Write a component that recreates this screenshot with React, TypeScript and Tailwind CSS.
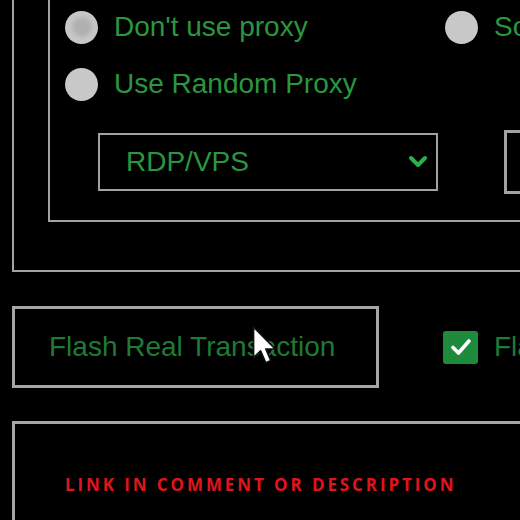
import React from "react";

type RadioProps = {
  label: string;
  active?: boolean;
  className?: string;
};

function Radio({ label, active = false, className = "" }: RadioProps) {
  return (
    <div className={`flex shrink-0 items-center gap-[16px] whitespace-nowrap ${className}`}>
      <span className="flex h-[33px] w-[33px] shrink-0 items-center justify-center rounded-full bg-[#c8c8c8]">
        {active && <span className="h-[20px] w-[20px] rounded-full bg-[#b0b0b0] blur-[2px]" />}
      </span>
      <span className="text-[28px] leading-none text-[#2a963f]">{label}</span>
    </div>
  );
}

function Cursor() {
  return (
    <svg
      className="absolute left-[252px] top-[326px]"
      width="25"
      height="39"
      viewBox="0 0 13 21"
      aria-hidden="true"
    >
      <path
        d="M0.6 0.6 L0.6 17 L4.4 13.4 L7.2 19.8 L9.9 18.6 L7.2 12.4 L12.2 12.4 Z"
        fill="#ffffff"
        stroke="#111111"
        strokeWidth="0.9"
        strokeLinejoin="round"
      />
    </svg>
  );
}

export default function App() {
  return (
    <main className="relative h-[520px] w-[520px] overflow-hidden bg-black font-['Liberation_Sans',Arial,sans-serif]">
      {/* proxy settings group */}
      <section className="ml-[12px] w-[580px] border-b-2 border-l-2 border-[#a2a2a2] pb-[48px] pl-[34px]">
        <div className="border-b-2 border-l-2 border-[#a2a2a2] pb-[26px] pl-[15px] pt-[7px]">
          <div className="flex h-[40px] items-center">
            <Radio label="Don't use proxy" active className="w-[380px]" />
            <Radio label="Socks Proxy" />
          </div>
          <div className="mt-[17px] flex h-[40px] items-center">
            <Radio label="Use Random Proxy" />
          </div>
          <div className="mt-[26px] flex h-[64px] items-center gap-[66px] pl-[33px]">
            <div className="flex h-[58px] w-[340px] shrink-0 items-center justify-between border-2 border-[#a2a2a2] pl-[26px] pr-[8px]">
              <span className="text-[28px] leading-none text-[#2a963f]">RDP/VPS</span>
              <svg width="20" height="14" viewBox="0 0 20 14" aria-hidden="true">
                <path
                  d="M3 3 L10 10 L17 3"
                  fill="none"
                  stroke="#2cb04a"
                  strokeWidth="4"
                  strokeLinecap="round"
                  strokeLinejoin="round"
                />
              </svg>
            </div>
            <div className="h-[64px] w-[120px] shrink-0 border-[3px] border-[#a2a2a2]" />
          </div>
        </div>
      </section>

      {/* action row */}
      <div className="mt-[34px] flex items-center">
        <button
          type="button"
          className="ml-[12px] flex h-[82px] w-[367px] shrink-0 items-center border-[3px] border-[#a6a6a6] pl-[34px] text-[28px] leading-none text-[#1f7a34]"
        >
          Flash Real Transaction
        </button>
        <div className="ml-[64px] flex shrink-0 items-center gap-[16px] whitespace-nowrap">
          <span className="flex h-[33px] w-[35px] items-center justify-center rounded-[3px] bg-[#1e8a3c]">
            <svg width="22" height="20" viewBox="0 0 22 20" aria-hidden="true">
              <path
                d="M3 10.5 L8.5 16 L19 4"
                fill="none"
                stroke="#ffffff"
                strokeWidth="3.6"
                strokeLinecap="round"
                strokeLinejoin="round"
              />
            </svg>
          </span>
          <span className="text-[28px] leading-none text-[#1f7a34]">Flash Mode</span>
        </div>
      </div>

      {/* bottom panel */}
      <section className="ml-[12px] mt-[33px] h-[200px] w-[580px] border-l-[3px] border-t-[3px] border-[#a6a6a6] pl-[50px] pt-[49px]">
        <p className="font-['Open_Sans',sans-serif] text-[17px] font-bold leading-[24px] tracking-[2.9px] text-[#e0141c]">
          LINK IN COMMENT OR DESCRIPTION
        </p>
      </section>

      <Cursor />
    </main>
  );
}
